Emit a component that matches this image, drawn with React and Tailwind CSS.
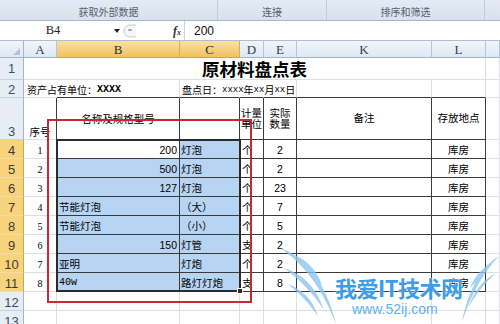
import React from 'react';

const LETTERS = ['A', 'B', 'C', 'D', 'E', 'K', 'L', ''];

const DATA = [
  [1, '200', '灯泡', '个', '2'],
  [2, '500', '灯泡', '个', '2'],
  [3, '127', '灯泡', '个', '23'],
  [4, '节能灯泡', '（大）', '个', '7'],
  [5, '节能灯泡', '（小）', '个', '5'],
  [6, '150', '灯管', '支', '2'],
  [7, '亚明', '灯炮', '个', '2'],
  [8, '40w', '路灯灯炮', '支', '8'],
];

function Cell({ r, c, className = '', children }) {
  const rightHidden = r === 2 && (c === 1 || c === 3 || c === 4);
  const rightDark = r >= 3 && r <= 11 && c >= 1 && c <= 7;
  const bottomDark = r >= 2 && r <= 11 && c >= 2 && c <= 7;
  const sel = r >= 4 && r <= 11 && (c === 2 || c === 3) && !(r === 4 && c === 2);
  const rc = rightHidden ? 'border-r-transparent' : rightDark ? 'border-r-[#3a3a3a]' : 'border-r-[#dcdee0]';
  const bc = bottomDark ? 'border-b-[#3a3a3a]' : 'border-b-[#dcdee0]';
  return (
    <div
      className={[
        'border-r border-b min-w-0 flex whitespace-nowrap text-[10.5px] leading-none',
        rc,
        bc,
        sel ? 'bg-[#b8d4f3]' : '',
        className,
      ].join(' ')}
    >
      {children}
    </div>
  );
}

function RowHead({ n }) {
  const sel = n >= 4 && n <= 11;
  const align = n === 1 ? 'items-center' : 'items-end pb-[1px]';
  return (
    <div
      className={[
        "flex justify-center border-r border-b font-['Liberation_Sans',sans-serif] text-[13px] leading-none",
        align,
        sel
          ? 'bg-[#f7d37d] border-r-[#c9a55c] border-b-[#f2dca6] text-[#3f3a30]'
          : 'bg-[#e7edf5] border-r-[#9eb6ce] border-b-[#c3d1e0] text-[#3a4c66]',
      ].join(' ')}
    >
      {n}
    </div>
  );
}

function ColHead({ l }) {
  const sel = l === 'B' || l === 'C';
  return (
    <div
      className={[
        "flex items-center justify-center border-r border-b font-['Liberation_Serif',serif] text-[13px] leading-none",
        sel
          ? 'bg-linear-to-b from-[#fae0a4] to-[#f1c15c] border-r-[#d7ad5e] border-b-[#c9a55c] text-[#2d2d2d]'
          : 'bg-linear-to-b from-[#f2f5fa] to-[#dfe8f2] border-r-[#b5c6d8] border-b-[#9eb6ce] text-[#2f3d50]',
      ].join(' ')}
    >
      {l}
    </div>
  );
}

export default function App() {
  const rows = [];

  rows.push(<RowHead key="h1" n={1} />);
  rows.push(
    <div
      key="t1"
      className="col-span-7 border-r border-b border-r-[#dcdee0] border-b-[#dcdee0] flex items-center justify-center text-[17.5px] font-bold leading-none pt-[1px]"
    >
      原材料盘点表
    </div>
  );
  rows.push(<Cell key="x1" r={1} c={8} />);

  rows.push(<RowHead key="h2" n={2} />);
  rows.push(
    <Cell key="a2" r={2} c={1} className="items-end pb-[2px] pl-[3px] text-[10px]">
      <span>资产占有单位：</span>
      <span className="font-['Liberation_Mono',monospace] font-bold text-[10px]">XXXX</span>
    </Cell>
  );
  rows.push(<Cell key="b2" r={2} c={2} />);
  rows.push(
    <Cell key="c2" r={2} c={3} className="items-end pb-[2px] pl-[2px] text-[10px]">
      <span>盘点日：</span>
      <span className="font-['Liberation_Mono',monospace] text-[9px]">xxxx</span>
      <span>年</span>
      <span className="font-['Liberation_Mono',monospace] text-[9px]">xx</span>
      <span>月</span>
      <span className="font-['Liberation_Mono',monospace] text-[9px]">xx</span>
      <span>日</span>
    </Cell>
  );
  [4, 5, 6, 7, 8].forEach((c) => rows.push(<Cell key={'r2' + c} r={2} c={c} />));

  rows.push(<RowHead key="h3" n={3} />);
  rows.push(
    <Cell key="a3" r={3} c={1} className="items-end justify-center pb-[2px]">
      序号
    </Cell>
  );
  rows.push(
    <Cell key="b3" r={3} c={2} className="items-center justify-center pt-[2px]">
      名称及规格型号
    </Cell>
  );
  rows.push(<Cell key="c3" r={3} c={3} />);
  rows.push(
    <Cell key="d3" r={3} c={4} className="flex-col items-center justify-center leading-[14px]">
      <span>计量</span>
      <span>单位</span>
    </Cell>
  );
  rows.push(
    <Cell key="e3" r={3} c={5} className="flex-col items-center justify-center leading-[14px]">
      <span>实际</span>
      <span>数量</span>
    </Cell>
  );
  rows.push(
    <Cell key="k3" r={3} c={6} className="items-center justify-center">
      备注
    </Cell>
  );
  rows.push(
    <Cell key="l3" r={3} c={7} className="items-center justify-center">
      存放地点
    </Cell>
  );
  rows.push(<Cell key="x3" r={3} c={8} />);

  DATA.forEach((d, i) => {
    const r = i + 4;
    const bIsNum = /^[0-9]+$/.test(d[1]);
    rows.push(<RowHead key={'h' + r} n={r} />);
    rows.push(
      <Cell key={'a' + r} r={r} c={1} className="items-end justify-center pb-[2px] font-['Liberation_Serif',serif] text-[10px]">
        {d[0]}
      </Cell>
    );
    rows.push(
      <Cell
        key={'b' + r}
        r={r}
        c={2}
        className={
          bIsNum
            ? "items-end justify-end pb-[3px] pr-[2px] font-['Liberation_Sans',sans-serif] text-[10.5px]"
            : d[1] === '40w'
            ? "items-end pb-[3px] pl-[2px] font-['Liberation_Mono',monospace] text-[10px]"
            : 'items-end pb-[3px] pl-[2px]'
        }
      >
        {d[1]}
      </Cell>
    );
    rows.push(
      <Cell key={'c' + r} r={r} c={3} className="items-end pb-[3px] pl-[1px]">
        {d[2]}
      </Cell>
    );
    rows.push(
      <Cell key={'d' + r} r={r} c={4} className="items-end pb-[3px] pl-[2px]">
        {d[3]}
      </Cell>
    );
    rows.push(
      <Cell key={'e' + r} r={r} c={5} className="items-end justify-center pb-[3px] font-['Liberation_Sans',sans-serif] text-[10.5px]">
        {d[4]}
      </Cell>
    );
    rows.push(<Cell key={'k' + r} r={r} c={6} />);
    rows.push(
      <Cell key={'l' + r} r={r} c={7} className="items-end justify-center pb-[3px]">
        库房
      </Cell>
    );
    rows.push(<Cell key={'x' + r} r={r} c={8} />);
  });

  [12, 13].forEach((r) => {
    rows.push(<RowHead key={'h' + r} n={r} />);
    [1, 2, 3, 4, 5, 6, 7, 8].forEach((c) => rows.push(<Cell key={'e' + r + c} r={r} c={c} />));
  });

  return (
    <div className="relative w-[500px] h-[324px] overflow-hidden bg-white font-['Noto_Sans_CJK_SC',sans-serif] text-black">
      <div className="flex h-[21px] bg-linear-to-b from-[#e4ebf4] to-[#d8e1ec] border-b border-[#a9b8ca] text-[10px] leading-none text-[#56616e]">
        <div className="w-[218px] flex items-end justify-center pb-[3px] border-r border-r-[#bfccdb]">获取外部数据</div>
        <div className="w-[109px] flex items-end justify-center pb-[3px] border-r border-r-[#bfccdb]">连接</div>
        <div className="w-[158px] flex items-end justify-center pb-[3px] border-r border-r-[#bfccdb]">排序和筛选</div>
        <div className="flex-1" />
      </div>

      <div className="flex items-center h-[20px] bg-white border-b border-[#aebdcf]">
        <div className="w-[106px] text-center font-['Liberation_Serif',serif] text-[12.5px] leading-none text-[#222]">B4</div>
        <svg className="ml-[8px]" width="6" height="4" viewBox="0 0 6 4">
          <polygon points="0,0 6,0 3,4" fill="#222" />
        </svg>
        <svg className="ml-[3px]" width="14" height="14" viewBox="0 0 14 14">
          <path d="M13,1 L7,1 A6,6 0 0 0 7,13 L13,13" fill="#f4f6f9" stroke="#c3ccd6" strokeWidth="1" />
          <rect x="5" y="5" width="4" height="2" rx="1" fill="#9aa6b3" />
        </svg>
        <div className="ml-[36px] font-['Liberation_Serif',serif] italic font-bold text-[12px] leading-none text-[#333]">
          f<span className="text-[8px]">x</span>
        </div>
        <div className="ml-[3px] h-full border-l border-[#c9d3de]" />
        <div className="pl-[9px] font-['Liberation_Sans',sans-serif] text-[12px] leading-none text-[#111]">200</div>
      </div>

      <div className="grid grid-cols-[24px_33px_123px_60px_24px_33px_135px_54px_14px] grid-rows-[17px_22px_18px_42px_repeat(10,19px)]">
        <div className="relative border-r border-b border-r-[#9eb6ce] border-b-[#9eb6ce] bg-linear-to-b from-[#f2f5fa] to-[#dfe8f2]">
          <svg className="absolute right-[3px] bottom-[2px]" width="7" height="7" viewBox="0 0 7 7">
            <polygon points="7,0 7,7 0,7" fill="#b7c2cf" />
          </svg>
        </div>
        {LETTERS.map((l, i) => (
          <ColHead key={'col' + i} l={l} />
        ))}
        {rows}
      </div>

      <div className="absolute left-[56px] top-[139px] w-[185px] h-[153px] border-2 border-[#2b2b2b] pointer-events-none">
        <div className="absolute -right-[4px] -bottom-[4px] w-[6px] h-[6px] bg-[#2b2b2b] border border-white" />
      </div>

      <div className="absolute left-[47px] top-[119px] w-[205px] h-[184px] border-2 border-[#c8282e] pointer-events-none" />

      <svg className="absolute left-[276px] top-[242px] pointer-events-none" width="224" height="82" viewBox="0 0 224 82">
        <g fill="#8cc6f0" opacity="0.8">
          <path d="M4,6 C28,14 50,40 60,82 C46,46 28,22 4,6 Z" />
          <path d="M8,26 C26,32 40,44 48,68 C36,50 24,38 8,26 Z" />
          <path d="M16,12 C32,18 42,30 46,44 C34,32 26,24 16,12 Z" />
          <path d="M12,42 C26,48 36,56 42,74 C32,60 24,52 12,42 Z" />
          <path d="M223,14 C206,24 192,48 186,80 C196,50 208,30 223,14 Z" />
          <path d="M219,32 C206,38 198,50 192,66 C200,52 208,42 219,32 Z" />
          <path d="M214,22 C204,28 198,36 194,46 C202,38 208,30 214,22 Z" />
        </g>
      </svg>
      <div className="absolute left-[335px] top-[276px] text-[22px] font-bold leading-none text-[#3e9ce8] tracking-[-0.5px] pointer-events-none [text-shadow:0_0_2px_#ffffff]">
        我爱IT技术网
      </div>
      <div className="absolute left-[352px] top-[302px] font-['Liberation_Sans',sans-serif] text-[14px] leading-none text-[#62b2ec] pointer-events-none">
        www.52ij.com
      </div>
    </div>
  );
}
